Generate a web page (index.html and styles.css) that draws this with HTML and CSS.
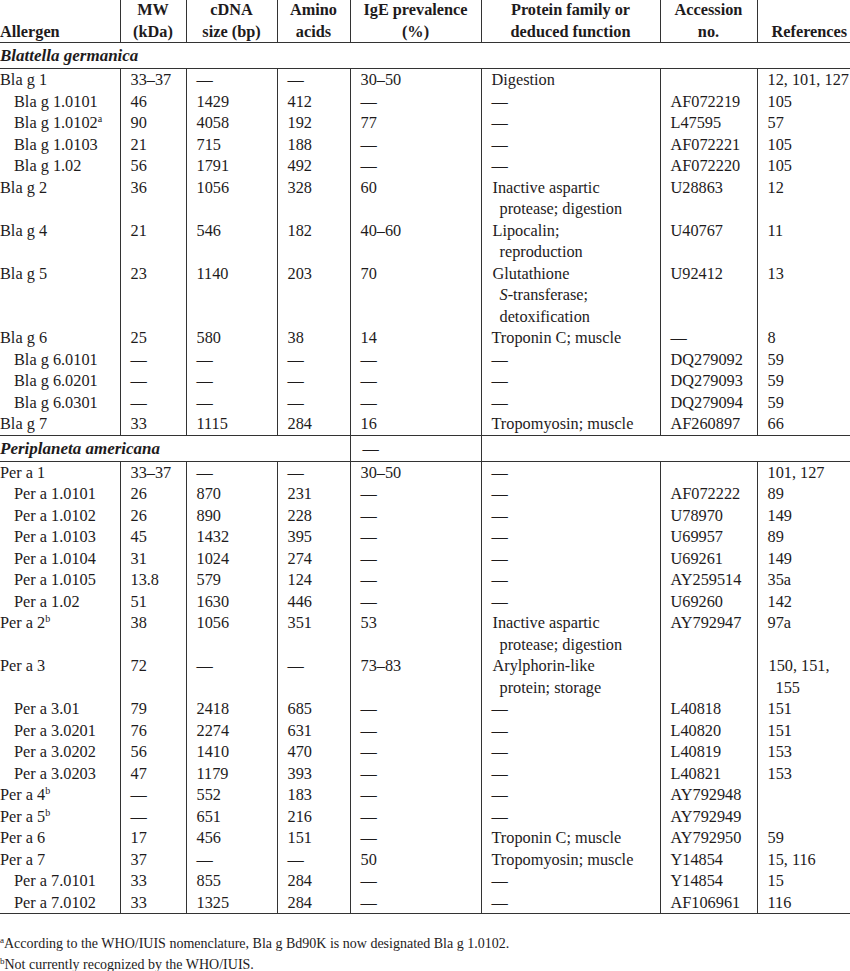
FILE: index.html
```html
<!DOCTYPE html>
<html>
<head>
<meta charset="utf-8">
<link rel="stylesheet" href="styles.css">
</head>
<body>
<table class="allergens">
<colgroup>
<col class="c1"><col class="c2"><col class="c3"><col class="c4"><col class="c5"><col class="c6"><col class="c7"><col class="c8">
</colgroup>
<thead>
<tr>
<th class="bottom left first">Allergen</th>
<th>MW<br>(kDa)</th>
<th>cDNA<br>size (bp)</th>
<th>Amino<br>acids</th>
<th>IgE prevalence<br>(%)</th>
<th>Protein family or<br>deduced function</th>
<th>Accession<br>no.</th>
<th class="bottom left refs">References</th>
</tr>
</thead>
<tbody>
<tr class="group"><td colspan="8">Blattella germanica</td></tr>
<tr class="data"><td>Bla g 1</td><td>33–37</td><td>—</td><td>—</td><td>30–50</td><td>Digestion</td><td></td><td>12, 101, 127</td></tr>
<tr class="data"><td class="sub">Bla g 1.0101</td><td>46</td><td>1429</td><td>412</td><td>—</td><td>—</td><td>AF072219</td><td>105</td></tr>
<tr class="data"><td class="sub">Bla g 1.0102<sup>a</sup></td><td>90</td><td>4058</td><td>192</td><td>77</td><td>—</td><td>L47595</td><td>57</td></tr>
<tr class="data"><td class="sub">Bla g 1.0103</td><td>21</td><td>715</td><td>188</td><td>—</td><td>—</td><td>AF072221</td><td>105</td></tr>
<tr class="data"><td class="sub">Bla g 1.02</td><td>56</td><td>1791</td><td>492</td><td>—</td><td>—</td><td>AF072220</td><td>105</td></tr>
<tr class="data"><td>Bla g 2</td><td>36</td><td>1056</td><td>328</td><td>60</td><td class="hang">Inactive aspartic<br>protease; digestion</td><td>U28863</td><td>12</td></tr>
<tr class="data"><td>Bla g 4</td><td>21</td><td>546</td><td>182</td><td>40–60</td><td class="hang">Lipocalin;<br>reproduction</td><td>U40767</td><td>11</td></tr>
<tr class="data"><td>Bla g 5</td><td>23</td><td>1140</td><td>203</td><td>70</td><td class="hang">Glutathione<br><i>S</i>-transferase;<br>detoxification</td><td>U92412</td><td>13</td></tr>
<tr class="data"><td>Bla g 6</td><td>25</td><td>580</td><td>38</td><td>14</td><td>Troponin C; muscle</td><td>—</td><td>8</td></tr>
<tr class="data"><td class="sub">Bla g 6.0101</td><td>—</td><td>—</td><td>—</td><td>—</td><td>—</td><td>DQ279092</td><td>59</td></tr>
<tr class="data"><td class="sub">Bla g 6.0201</td><td>—</td><td>—</td><td>—</td><td>—</td><td>—</td><td>DQ279093</td><td>59</td></tr>
<tr class="data"><td class="sub">Bla g 6.0301</td><td>—</td><td>—</td><td>—</td><td>—</td><td>—</td><td>DQ279094</td><td>59</td></tr>
<tr class="data"><td>Bla g 7</td><td>33</td><td>1115</td><td>284</td><td>16</td><td>Tropomyosin; muscle</td><td>AF260897</td><td>66</td></tr>
<tr class="group"><td colspan="4">Periplaneta americana</td><td class="plain boxed">—</td><td colspan="3"></td></tr>
<tr class="data"><td>Per a 1</td><td>33–37</td><td>—</td><td>—</td><td>30–50</td><td>—</td><td></td><td>101, 127</td></tr>
<tr class="data"><td class="sub">Per a 1.0101</td><td>26</td><td>870</td><td>231</td><td>—</td><td>—</td><td>AF072222</td><td>89</td></tr>
<tr class="data"><td class="sub">Per a 1.0102</td><td>26</td><td>890</td><td>228</td><td>—</td><td>—</td><td>U78970</td><td>149</td></tr>
<tr class="data"><td class="sub">Per a 1.0103</td><td>45</td><td>1432</td><td>395</td><td>—</td><td>—</td><td>U69957</td><td>89</td></tr>
<tr class="data"><td class="sub">Per a 1.0104</td><td>31</td><td>1024</td><td>274</td><td>—</td><td>—</td><td>U69261</td><td>149</td></tr>
<tr class="data"><td class="sub">Per a 1.0105</td><td>13.8</td><td>579</td><td>124</td><td>—</td><td>—</td><td>AY259514</td><td>35a</td></tr>
<tr class="data"><td class="sub">Per a 1.02</td><td>51</td><td>1630</td><td>446</td><td>—</td><td>—</td><td>U69260</td><td>142</td></tr>
<tr class="data"><td>Per a 2<sup>b</sup></td><td>38</td><td>1056</td><td>351</td><td>53</td><td class="hang">Inactive aspartic<br>protease; digestion</td><td>AY792947</td><td>97a</td></tr>
<tr class="data"><td>Per a 3</td><td>72</td><td>—</td><td>—</td><td>73–83</td><td class="hang">Arylphorin-like<br>protein; storage</td><td></td><td class="hang">150, 151,<br>155</td></tr>
<tr class="data"><td class="sub">Per a 3.01</td><td>79</td><td>2418</td><td>685</td><td>—</td><td>—</td><td>L40818</td><td>151</td></tr>
<tr class="data"><td class="sub">Per a 3.0201</td><td>76</td><td>2274</td><td>631</td><td>—</td><td>—</td><td>L40820</td><td>151</td></tr>
<tr class="data"><td class="sub">Per a 3.0202</td><td>56</td><td>1410</td><td>470</td><td>—</td><td>—</td><td>L40819</td><td>153</td></tr>
<tr class="data"><td class="sub">Per a 3.0203</td><td>47</td><td>1179</td><td>393</td><td>—</td><td>—</td><td>L40821</td><td>153</td></tr>
<tr class="data"><td>Per a 4<sup>b</sup></td><td>—</td><td>552</td><td>183</td><td>—</td><td>—</td><td>AY792948</td><td></td></tr>
<tr class="data"><td>Per a 5<sup>b</sup></td><td>—</td><td>651</td><td>216</td><td>—</td><td>—</td><td>AY792949</td><td></td></tr>
<tr class="data"><td>Per a 6</td><td>17</td><td>456</td><td>151</td><td>—</td><td>Troponin C; muscle</td><td>AY792950</td><td>59</td></tr>
<tr class="data"><td>Per a 7</td><td>37</td><td>—</td><td>—</td><td>50</td><td>Tropomyosin; muscle</td><td>Y14854</td><td>15, 116</td></tr>
<tr class="data"><td class="sub">Per a 7.0101</td><td>33</td><td>855</td><td>284</td><td>—</td><td>—</td><td>Y14854</td><td>15</td></tr>
<tr class="data last"><td class="sub">Per a 7.0102</td><td>33</td><td>1325</td><td>284</td><td>—</td><td>—</td><td>AF106961</td><td>116</td></tr>
</tbody>
</table>
<div class="notes">
<p><sup>a</sup>According to the WHO/IUIS nomenclature, Bla g Bd90K is now designated Bla g 1.0102.</p>
<p><sup>b</sup>Not currently recognized by the WHO/IUIS.</p>
</div>
</body>
</html>
```
FILE: styles.css
```css
html, body {
  margin: 0;
  padding: 0;
  background: #ffffff;
}
body {
  font-family: "Liberation Serif", "Times New Roman", serif;
  color: #1e1b1c;
  font-size: 16.3px;
}
.allergens {
  border-collapse: collapse;
  table-layout: fixed;
  width: 850px;
  margin-top: -1px;
}
.c1 { width: 120px; }
.c2 { width: 66px; }
.c3 { width: 91px; }
.c4 { width: 73px; }
.c5 { width: 131px; }
.c6 { width: 179px; }
.c7 { width: 97px; }
.c8 { width: 93px; }

.allergens th {
  font-weight: bold;
  line-height: 21.5px;
  padding: 0;
  text-align: center;
  vertical-align: top;
  white-space: nowrap;
  border-bottom: 1.5px solid #333;
}
.allergens th + th {
  border-left: 1.5px solid #333;
}
.allergens th.bottom {
  vertical-align: bottom;
}
.allergens th.left {
  text-align: left;
}
.allergens th.first {
  padding-left: 0;
}
.allergens th.refs {
  padding-left: 14px;
}

.allergens td {
  line-height: 21.5px;
  padding: 0 0 0 10px;
  vertical-align: top;
  white-space: nowrap;
  overflow: visible;
}
.data td:first-child {
  padding-left: 0;
}
.data td.sub {
  padding-left: 14px;
}
.data td + td {
  border-left: 1.5px solid #333;
}
.data td.hang {
  padding-left: 18px;
  text-indent: -7px;
}
.data.last td {
  border-bottom: 1.5px solid #333;
}

.group td {
  font-weight: bold;
  font-style: italic;
  font-size: 17px;
  line-height: 24px;
  padding: 1px 0 0 0;
  border-top: 1.5px solid #333;
  border-bottom: 1.5px solid #333;
}
.group td.plain {
  font-weight: normal;
  font-style: normal;
  font-size: 16.3px;
  padding-left: 12px;
}
.group td.boxed {
  border-left: 1.5px solid #333;
  border-right: 1.5px solid #333;
}

sup {
  font-size: 10px;
  line-height: 0;
  vertical-align: 6px;
}

.notes {
  margin-top: 19px;
  font-size: 14px;
}
.notes p {
  margin: 0;
  line-height: 21px;
}
.notes sup {
  font-size: 9px;
  vertical-align: 5px;
}
```
